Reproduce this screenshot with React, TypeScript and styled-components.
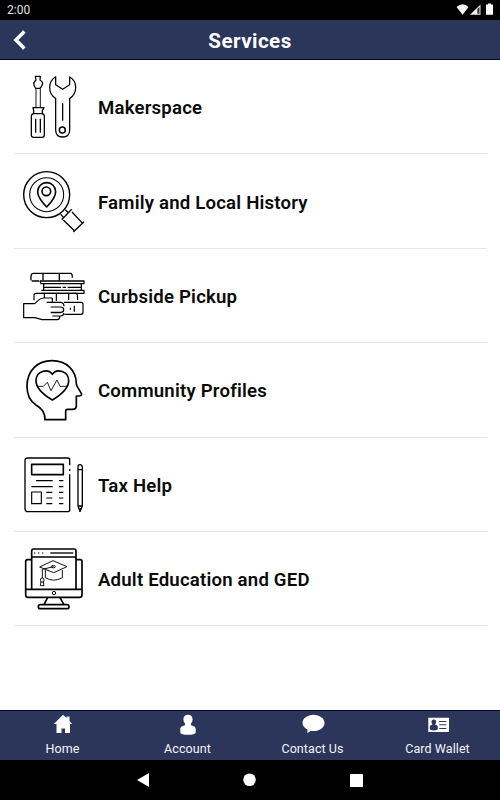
import React from "react";
import styled, { createGlobalStyle } from "styled-components";

const Global = createGlobalStyle`
  * { box-sizing: border-box; }
  body { margin: 0; background: #fff; font-family: Roboto, "Liberation Sans", sans-serif; }
`;
const Screen = styled.div`
  width: 500px; height: 800px; display: flex; flex-direction: column; overflow: hidden; background: #fff;
`;
const StatusBar = styled.div`
  height: 20px; flex: none; background: #000; color: #e2e2e2; display: flex; align-items: center;
  justify-content: space-between; padding: 0 6px 0 7px; font-size: 12px; line-height: 20px;
  svg { display: block; }
`;
const Header = styled.header`
  height: 40px; flex: none; background: #2c365a; border-bottom: 1px solid #03062e; color: #fff;
  display: grid; grid-template-columns: 40px 1fr 40px; align-items: center;
`;
const BackButton = styled.button`
  border: 0; padding: 0; background: none; height: 39px; width: 40px;
  svg { display: block; }
`;
const Title = styled.h1`
  margin: 0; padding-top: 3px; font-size: 20.6px; font-weight: 700; letter-spacing: 0.45px; text-align: center; line-height: 24px;
`;
const List = styled.main`
  flex: 1; padding: 0 13.5px; display: flex; flex-direction: column;
`;
const Row = styled.div`
  height: 94.4px; flex: none; border-bottom: 1px solid #e6e6e6; display: flex; align-items: center;
  svg { flex: none; margin-left: 1.5px; display: block; }
`;
const Label = styled.span`
  margin-left: 3px; padding-top: 3px; font-size: 18.6px; font-weight: 600; letter-spacing: 0.2px; color: #0a0a0a; line-height: 24px;
`;
const TabBar = styled.nav`
  height: 50px; flex: none; background: #2c365a; border-top: 1px solid #03062e;
  display: grid; grid-template-columns: repeat(4, 1fr);
`;
const Tab = styled.div`
  display: flex; flex-direction: column; align-items: center; color: #f4f4f6; font-size: 12.5px; letter-spacing: 0.08px; line-height: 16px;
  svg { display: block; margin-bottom: 4px; }
`;
const SystemNav = styled.div`
  height: 40px; flex: none; background: #000;
  display: flex; justify-content: center; 
  svg { display: block; }
`;

const Art = ({ top, children }: { top: number; children: React.ReactNode }) => (
  <svg width="80" height="93" viewBox={`0 ${-top} 240 279`} fill="none" stroke="#000" strokeWidth="3.8" strokeLinejoin="round">
    {children}
  </svg>
);

const Tools = () => (
  <Art top={16}>
    <path d="M61 33h15l-1 11q8 5 8 12-3 7-8 13H62q-5-6-6-13 1-7 7-12zM54 127h33l-5 9v9H56v-9zM56 145q-7 1-7 8v56q0 7 7 7h25q7 0 7-7v-56q0-7-7-8" />
    <path d="M63 69v57M76 69v57" stroke="#222" strokeWidth="3.2" />
    <path d="M62 160v42M76 160v42M143 114v52" />
    <path d="M122 34q-18 11-18 32 0 23 18 33v95q0 21 21 21t21-21V99q18-10 18-33 0-21-18-31v23l-21 14-21-14z" />
    <circle cx="142" cy="194" r="9" strokeWidth="4.5" />
  </Art>
);
const Magnifier = () => (
  <Art top={24}>
    <circle cx="95" cy="95" r="69" strokeWidth="4.2" />
    <circle cx="95" cy="95" r="51" strokeWidth="3.2" />
    <path d="M95 132q-27-28-27-46a27 27 0 0 1 54 0q0 18-27 46z" strokeWidth="4.8" />
    <circle cx="94" cy="85" r="13" strokeWidth="4.8" />
    <path d="M137 154l10 11M151 140l10 10M140 170l30-31M145 171l34 33M171 147l32 34M175 207l32-31" strokeWidth="4" />
  </Art>
);
const Books = () => (
  <Art top={36}>
    <path d="M48 58q-2-21 7-21h112q5 0 5 13M50 60h22M84 38v20M133 38v21" strokeWidth="4" />
    <path d="M75 60h132v8H78zM79 88h128v9H77M86 67v21M199 67v21M86 79h52M143 79h10M158 79h41" strokeWidth="3.8" />
    <path d="M57 118v-15q0-6 7-6h119q5 0 5 20M88 98v13M124 98v22M161 98v19" strokeWidth="3.5" />
    <path d="M112 111H86q-9 0-17 8l-10 9H26v42h34l21 6h45q9-1 8-9M112 111v11M95 124h42q10 1 10 12M107 138h30q9 0 9 8t-9 8h-30M107 155h30M112 165h25q9-1 9-9M147 124h51q6 0 6 6v24q0 6-6 6h-50M166 140v6M178 134v18" strokeWidth="3.6" />
  </Art>
);
const Head = () => (
  <Art top={22}>
    <path d="M91 208H90c0-23-10-34-28-45C45 152 36 133 36 108c0-47 31-77 75-77s72 29 73 68q0 5 3 10l12 20q3 6-6 8h-9v31q-1 9-11 9h-16q-5 0-5 5v26z" strokeWidth="5" />
    <path d="M112 149C79 129 63 112 63 91c0-29 36-38 49-19 13-19 49-10 49 19 0 21-16 38-49 58z" strokeWidth="5" />
    <path d="M66 108h19l12-12 11 25 18-32 9 19h22" strokeWidth="2.6" />
  </Art>
);
const Tax = () => (
  <Art top={22}>
    <path d="M164 60V43q0-5-6-5H38q-8 0-8 8v144q0 9 9 9h119q6 0 6-6V87M164 71v6" strokeWidth="4" />
    <path d="M50 57h95v31H50z" strokeWidth="4.8" />
    <path d="M63 106h50M49 124h64M132 106h13M132 124h13M94 141h18M94 158h18M94 175h18M132 141h13M132 158h13M132 175h13" strokeWidth="3.4" />
    <path d="M50 140h29v35H50z" strokeWidth="3.4" />
    <path d="M189 182V65q0-7 6-7t7 7v117l-7 16zM189 73h13M189 182h13" strokeWidth="4" />
    <path d="M193 191l2 7 3-7z" fill="#0a0a0a" />
  </Art>
);
const Education = () => (
  <Art top={18}>
    <path d="M50 154V39q0-6 6-6h122q5 0 5 6v115M50 57h133" strokeWidth="5" />
    <path d="M106 45h69" strokeWidth="4" />
    <path d="M57 45h4M69 45h4M81 45h4" strokeWidth="3.5" />
    <path d="M50 65H38q-6 0-6 6v99q0 8 8 8h153q8 0 8-8V71q0-6-6-6h-12M32 154h169M98 179l-11 21M135 179l12 21M76 200h80q6 0 6 6t-6 6H76q-6 0-6-6t6-6z" strokeWidth="5" />
    <circle cx="117" cy="165" r="5" strokeWidth="3" />
    <path d="M74 87l40-19 42 18-40 18zM91 96v23q24 15 51 0V96M116 86l-34 8v27" strokeWidth="2.8" />
    <ellipse cx="115" cy="86" rx="6" ry="3.5" strokeWidth="2.8" />
    <path d="M82 120q6 0 5 7l-2 5 2 11H76l2-11q-5-12 4-12zM77 132h8" strokeWidth="2.8" />
  </Art>
);

const services = [
  { label: "Makerspace", icon: <Tools /> },
  { label: "Family and Local History", icon: <Magnifier /> },
  { label: "Curbside Pickup", icon: <Books /> },
  { label: "Community Profiles", icon: <Head /> },
  { label: "Tax Help", icon: <Tax /> },
  { label: "Adult Education and GED", icon: <Education /> },
];

const TabArt = ({ children }: { children: React.ReactNode }) => (
  <svg width="24" height="26" viewBox="0 0 24 26" fill="#fff">{children}</svg>
);
const tabs = [
  { label: "Home", icon: <path d="M12 3.700l3.500 3.400V5.500h3v4.800L21.300 13H19v9h-5v-4.500h-3.500V22h-5v-9H2.800z" /> },
  { label: "Account", icon: <path d="M12 3.700c3 0 4.600 1.800 4.600 4.600 0 2-.8 3.200-1.600 4.200v1.700c2.500.8 4.700 1.300 4.700 4v3c0 1.800-3.500 2.600-7.700 2.600s-7.700-.8-7.700-2.600v-3c0-2.700 2.200-3.200 4.700-4v-1.700c-.8-1-1.600-2.200-1.600-4.200C7.400 5.500 9 3.700 12 3.700z" /> },
  { label: "Contact Us", icon: <path d="M12.500 3.800c6 0 11 3.600 11 8.200s-5 8.100-11 8.100c-1 0-2-.1-2.900-.3-.8.9-1.900 1.700-3.300 2.300l.2-3.500C3.500 17.200 1.500 14.800 1.500 12c0-4.600 5-8.200 11-8.200z" /> },
  { label: "Card Wallet", icon: <path fillRule="evenodd" d="M2.300 6.700h20.700v14.300H2.300zM7.800 8.400c-1.600 0-2.400 1-2.400 2.300 0 1 .4 1.700.9 2.300v.8c-1.500.4-2.500.8-2.500 2.100v1.800c0 1.300 1.700 1.700 4 1.700s4-.4 4-1.700v-1.800c0-1.300-1-1.700-2.500-2.100v-.8c.5-.6.9-1.300.9-2.300 0-1.300-.8-2.300-2.400-2.300zM13.300 10v1.100h7V10zM13.300 13.200v1.100h7v-1.100zM13.300 17v1.100h7V17z" /> },
];

export default function App() {
  return (
    <Screen>
      <Global />
      <StatusBar>
        <span>2:00</span>
        <svg width="38" height="20" viewBox="0 0 38 20">
          <path d="M.5 7Q6.500 1.500 12.500 7L6.600 14.700z" fill="#f5f5f5" />
          <path d="M14 14.700L24.500 4.500v10.200z" fill="#eee" />
          <path d="M21.300 9L23.500 7v6.700h-2.200z" fill="#333" />
          <path d="M30 4.500h2V3.500h3v1h2v10.200h-7z" fill="#fff" />
        </svg>
      </StatusBar>
      <Header>
        <BackButton aria-label="Back">
          <svg width="40" height="39" viewBox="0 0 40 39" fill="none" stroke="#fff" strokeWidth="3.500">
            <path d="M24.400 11.500L15.900 20l8.500 8.500" />
          </svg>
        </BackButton>
        <Title>Services</Title>
      </Header>
      <List>
        {services.map((s) => (
          <Row key={s.label}>{s.icon}<Label>{s.label}</Label></Row>
        ))}
      </List>
      <TabBar>
        {tabs.map((t) => (
          <Tab key={t.label}><TabArt>{t.icon}</TabArt><span>{t.label}</span></Tab>
        ))}
      </TabBar>
      <SystemNav>
        <svg width="240" height="40" viewBox="130 0 240 40" fill="#fff">
          <path d="M137 20l12-7v14z" />
          <circle cx="249.500" cy="19.700" r="6.300" />
          <rect x="350" y="14" width="13" height="13" rx=".5" />
        </svg>
      </SystemNav>
    </Screen>
  );
}
